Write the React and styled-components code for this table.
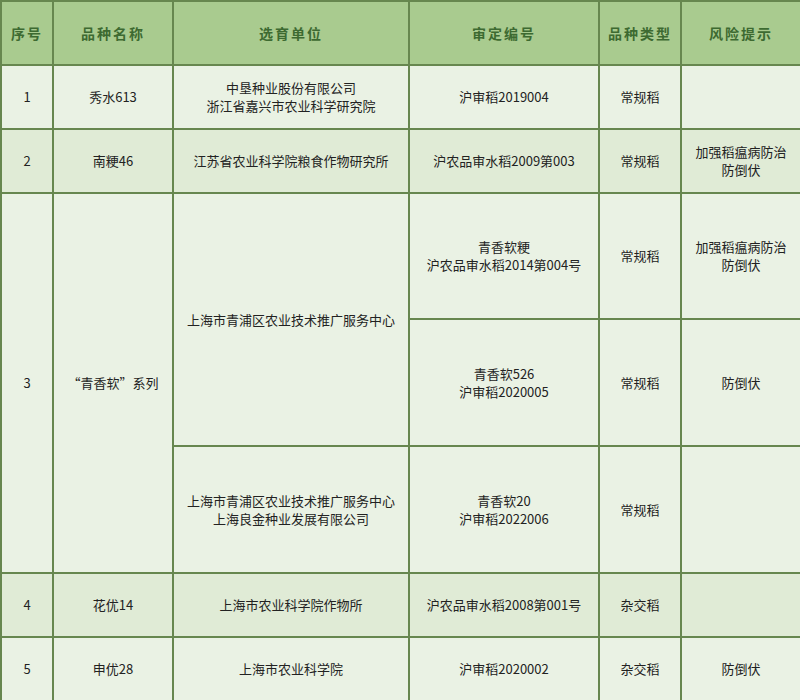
import React from "react";
import styled, { createGlobalStyle } from "styled-components";

const GlobalStyle = createGlobalStyle`
  html, body {
    margin: 0;
    padding: 0;
    background: #eaf2e4;
  }
  body {
    font-family: "Noto Sans CJK SC", "Noto Sans", sans-serif;
  }
`;

const Table = styled.table`
  width: 800px;
  height: 700px;
  table-layout: fixed;
  border-collapse: collapse;
  font-size: 13px;
  color: #222;
`;

const Th = styled.th`
  height: 62px;
  padding: 0;
  background: #a9cb8f;
  color: #3d6a31;
  font-size: 14px;
  font-weight: 700;
  letter-spacing: 2px;
  border: 2px solid #67874f;
  text-align: center;
  vertical-align: middle;
`;

const Td = styled.td`
  height: ${(p) => p.$h || 62}px;
  padding: 0 4px;
  background: ${(p) => (p.$dark ? "#e0ebd6" : "#eaf2e4")};
  border: 2px solid #67874f;
  text-align: center;
  vertical-align: middle;
  line-height: 18px;
  white-space: pre-line;
`;

const cols = [52, 120, 236, 190, 82, 120];

export default function App() {
  return (
    <>
      <GlobalStyle />
      <Table>
        <colgroup>
          {cols.map((w, i) => (
            <col key={i} style={{ width: w }} />
          ))}
        </colgroup>
        <thead>
          <tr>
            <Th>序号</Th>
            <Th>品种名称</Th>
            <Th>选育单位</Th>
            <Th>审定编号</Th>
            <Th>品种类型</Th>
            <Th>风险提示</Th>
          </tr>
        </thead>
        <tbody>
          <tr>
            <Td>1</Td>
            <Td>秀水613</Td>
            <Td>{"中垦种业股份有限公司\n浙江省嘉兴市农业科学研究院"}</Td>
            <Td>沪审稻2019004</Td>
            <Td>常规稻</Td>
            <Td></Td>
          </tr>
          <tr>
            <Td $dark>2</Td>
            <Td $dark>南粳46</Td>
            <Td $dark>江苏省农业科学院粮食作物研究所</Td>
            <Td $dark>沪农品审水稻2009第003</Td>
            <Td $dark>常规稻</Td>
            <Td $dark>{"加强稻瘟病防治\n防倒伏"}</Td>
          </tr>
          <tr>
            <Td rowSpan={3}>3</Td>
            <Td rowSpan={3}>“青香软”系列</Td>
            <Td rowSpan={2}>上海市青浦区农业技术推广服务中心</Td>
            <Td $h={124}>{"青香软粳\n沪农品审水稻2014第004号"}</Td>
            <Td $h={124}>常规稻</Td>
            <Td $h={124}>{"加强稻瘟病防治\n防倒伏"}</Td>
          </tr>
          <tr>
            <Td $h={125}>{"青香软526\n沪审稻2020005"}</Td>
            <Td $h={125}>常规稻</Td>
            <Td $h={125}>防倒伏</Td>
          </tr>
          <tr>
            <Td $h={125}>{"上海市青浦区农业技术推广服务中心\n上海良金种业发展有限公司"}</Td>
            <Td $h={125}>{"青香软20\n沪审稻2022006"}</Td>
            <Td $h={125}>常规稻</Td>
            <Td $h={125}></Td>
          </tr>
          <tr>
            <Td $dark>4</Td>
            <Td $dark>花优14</Td>
            <Td $dark>上海市农业科学院作物所</Td>
            <Td $dark>沪农品审水稻2008第001号</Td>
            <Td $dark>杂交稻</Td>
            <Td $dark></Td>
          </tr>
          <tr>
            <Td>5</Td>
            <Td>申优28</Td>
            <Td>上海市农业科学院</Td>
            <Td>沪审稻2020002</Td>
            <Td>杂交稻</Td>
            <Td>防倒伏</Td>
          </tr>
        </tbody>
      </Table>
    </>
  );
}
